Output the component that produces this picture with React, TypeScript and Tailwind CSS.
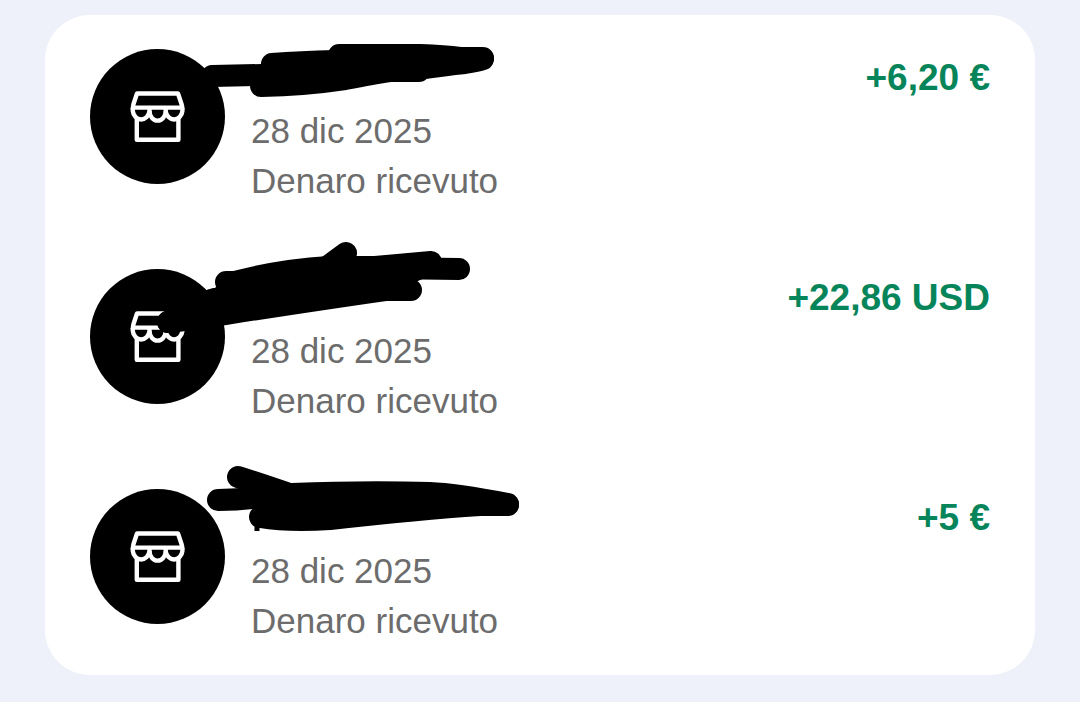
interface Movement {
  id: number
  date: string
  label: string
  amount: string
  // black marker strokes drawn over the sender's name
  lines: string[]
  shape: string
  tick?: string
}

const movements: Movement[] = [
  {
    id: 1,
    date: '28 dic 2025',
    label: 'Denaro ricevuto',
    amount: '+6,20 €',
    lines: [
      'M167 61 L217 60',
      'M227 49 Q255 47 290 46',
      'M294 40 H375 Q400 41 415 43 H438',
      'M216 71 Q260 70 300 64 Q330 58 345 56 L374 56',
      'M374 54 Q400 50 420 48 Q432 46 438 44',
    ],
    shape: 'M227 45 L294 40 L438 43 L434 50 L375 58 L300 66 L216 71 Z',
  },
  {
    id: 2,
    date: '28 dic 2025',
    label: 'Denaro ricevuto',
    amount: '+22,86 USD',
    lines: [
      'M123 87 L140 85 L180 79 Q270 65 340 55 H366',
      'M123 87 Q145 70 170 64',
      'M301 18 L275 37',
      'M181 47 H190 Q235 35 284 32 H340',
      'M330 32 L386 27',
      'M340 33 L414 34',
    ],
    shape: 'M162 55 L170 53 L181 40 L284 27 L386 27 L387 40 L340 60 L180 86 L150 82 Z',
  },
  {
    id: 3,
    date: '28 dic 2025',
    label: 'Denaro ricevuto',
    amount: '+5 €',
    lines: [
      'M193 22 Q215 29 247 40',
      'M173 45 Q200 45 230 40',
      'M215 62 Q245 67 285 64 Q375 54 435 50 H463',
      'M247 39 Q320 36 385 38 Q410 39 463 49',
    ],
    shape: 'M230 40 L250 36 L385 36 L463 48 L375 58 L285 66 L215 64 Z',
    tick: 'M212 68 V76',
  },
]

function StoreIcon() {
  return (
    <svg
      width="56"
      height="56"
      viewBox="0 0 56 56"
      fill="none"
      stroke="white"
      strokeWidth="4.4"
      strokeLinejoin="round"
      aria-hidden="true"
    >
      <path d="M2.8 20 Q2.8 18 3.5 15 L7 4.5 H48 L51.5 15 Q52.4 18 52.4 20" />
      <path d="M3 18.6 H52" />
      <path d="M2.8 19 V22 A8.4 9.5 0 0 0 19.5 22 V19" />
      <path d="M19.5 22 A8 9.5 0 0 0 35.7 22 V19" />
      <path d="M35.7 22 A8.4 9.5 0 0 0 52.4 22 V19" />
      <path d="M6.8 29 V50.8 H48.4 V29" />
    </svg>
  )
}

function Scribble({ lines, shape, tick }: { lines: string[]; shape: string; tick?: string }) {
  return (
    <svg
      className="absolute top-0 left-0 pointer-events-none"
      width="500"
      height="220"
      viewBox="0 0 500 220"
      fill="none"
      stroke="black"
      aria-hidden="true"
    >
      <path d={shape} fill="black" stroke="none" />
      {lines.map(d => (
        <path key={d} d={d} strokeWidth="22" strokeLinecap="round" strokeLinejoin="round" />
      ))}
      {tick && <path d={tick} strokeWidth="5" />}
    </svg>
  )
}

function MovementRow({ item }: { item: Movement }) {
  return (
    <li className="relative flex items-start h-[220px] px-[45px] pt-[34px]">
      <div className="flex items-center justify-center shrink-0 w-[135px] h-[135px] rounded-full bg-black">
        <StoreIcon />
      </div>
      <div className="flex-1 pl-[26px] pt-[57px] text-[35px] leading-[50px] text-[#6c6c6c]">
        <p>{item.date}</p>
        <p>{item.label}</p>
      </div>
      <p className="pt-1 text-[37px] leading-[50px] font-semibold text-[#07855a] whitespace-nowrap">{item.amount}</p>
      <Scribble lines={item.lines} shape={item.shape} tick={item.tick} />
    </li>
  )
}

export default function App() {
  return (
    <main className="min-h-screen bg-[#eef1fa] px-[45px] pt-[15px] pb-[27px] font-['Liberation_Sans',Arial,sans-serif]">
      <ul className="bg-white rounded-[45px]">
        {movements.map(item => (
          <MovementRow key={item.id} item={item} />
        ))}
      </ul>
    </main>
  )
}
